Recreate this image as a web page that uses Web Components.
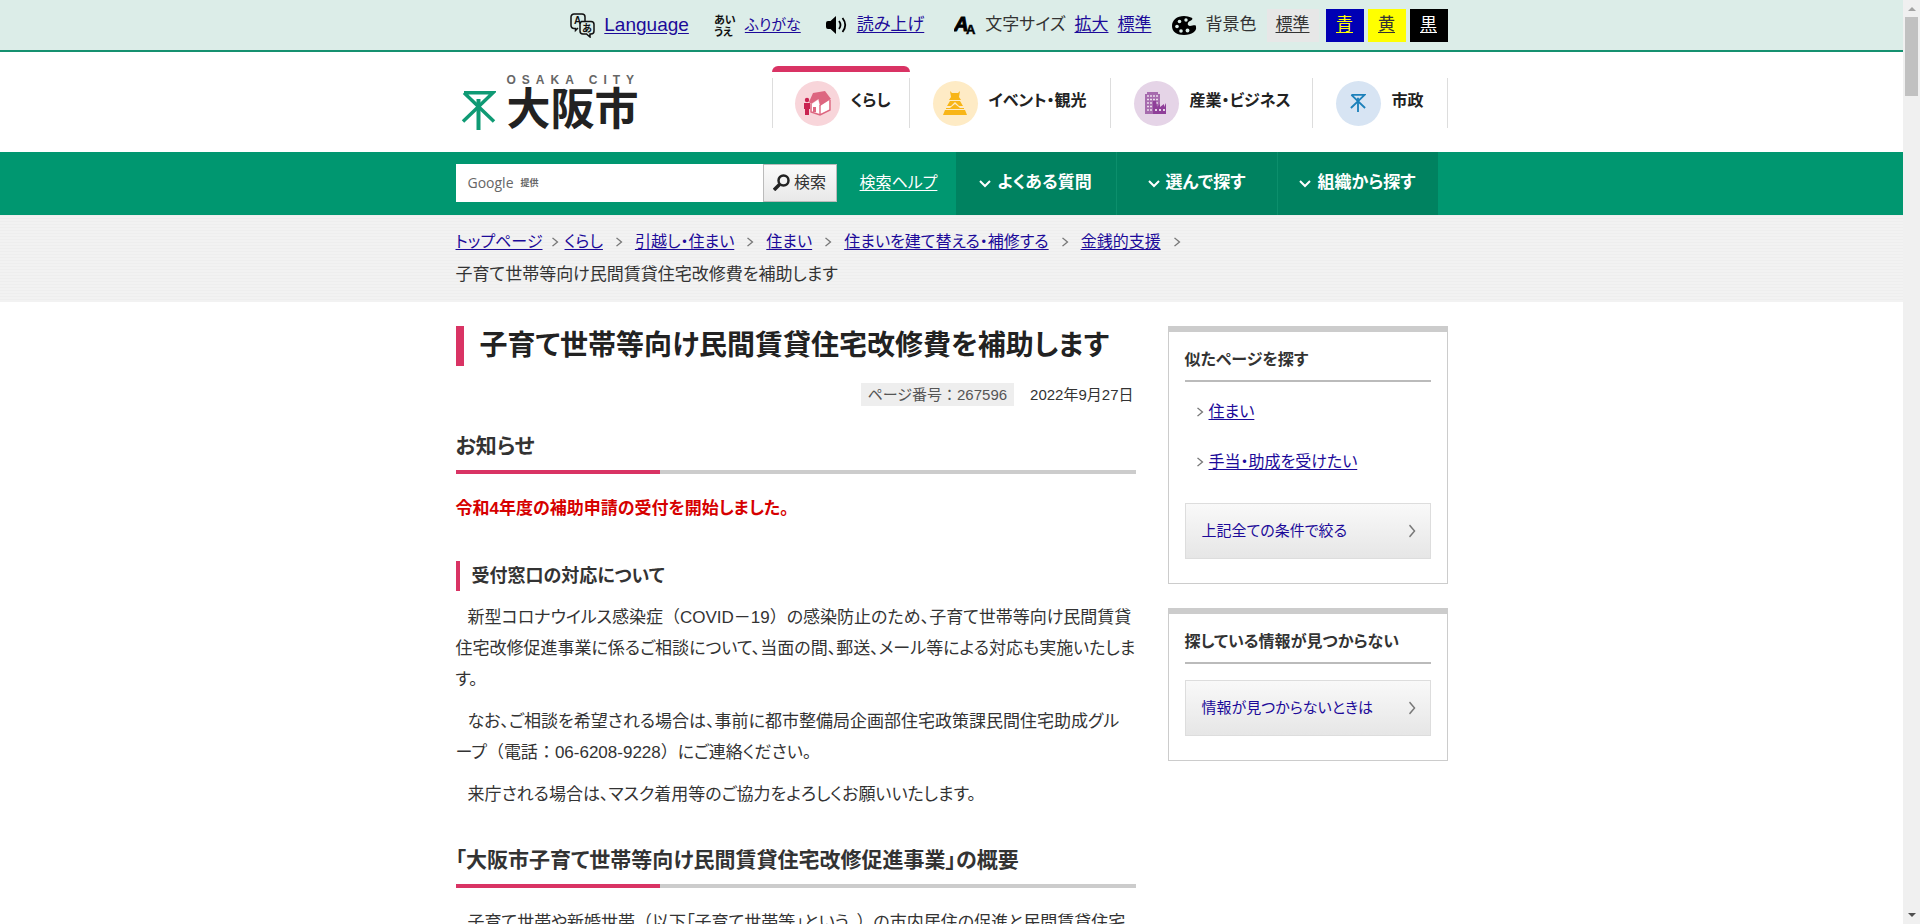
<!DOCTYPE html>
<html lang="ja">
<head>
<meta charset="utf-8">
<meta name="viewport" content="width=device-width, initial-scale=1">
<title>大阪市:子育て世帯等向け民間賃貸住宅改修費を補助します</title>
<style>
  html { scrollbar-width: none; }
  body {
    margin: 0;
    --green: #009770;
    --green-dark: #008260;
    --pink: #d93364;
    --grey: #ccc;
    --link: #1c0a99;
    --page: 992px;
    color: #333;
    background: #fff;
    font: 16px/30px "Liberation Sans", "Noto Sans CJK JP", sans-serif;
    font-feature-settings: "palt";
  }
</style>
</head>
<body>
<osaka-page></osaka-page>

<script>
const define = (name, html) => {
  const tpl = document.createElement('template');
  tpl.innerHTML = html;
  customElements.define(name, class extends HTMLElement {
    constructor() {
      super();
      this.attachShadow({ mode: 'open' }).append(tpl.content.cloneNode(true));
    }
  });
};

/* Chevron: dir="down" turns it */
define('arrow-mark', `
<style>
  :host { display: inline-block; flex: none; width: 8px; height: 10px; color: #777; }
  :host([dir=down]) { width: 12px; height: 12px; color: #fff; }
  :host([size=large]) { width: 8px; height: 14px; }
  svg { display: block; width: 100%; height: 100%; fill: none; stroke: currentColor; stroke-width: 1.4; overflow: visible; }
  .d { display: none; }
  :host([dir=down]) .r { display: none; }
  :host([dir=down]) .d { display: block; stroke-width: 2; }
</style>
<svg class="r" viewBox="0 0 8 12" preserveAspectRatio="none"><path d="M1.5 1 6.5 6 1.5 11"/></svg>
<svg class="d" viewBox="0 0 12 12"><path d="M1 4 6 9 11 4"/></svg>`);

define('tool-item', `
<style>
  :host { display: flex; align-items: center; }
  .icon { flex: none; display: flex; margin-right: 9px; }
  .body { display: flex; gap: 9px; }
</style>
<span class="icon"><slot name="icon"></slot></span><span class="body"><slot></slot></span>`);

define('tool-bar', `
<style>
  :host { display: block; background: #dcede8; border-bottom: 2px solid #159170; }
  .in { max-width: var(--page); height: 50px; margin: 0 auto; display: flex; align-items: center; justify-content: flex-end; font-size: 17px; line-height: 24px; }
  tool-item { margin-right: 25px; }
  tool-item.size { margin: 0 20px 0 5px; }
  tool-item.bg { margin-right: 10px; }
  a { color: var(--link); text-underline-offset: 2px; }
  a.lang { font-size: 19px; }
  a.kana { font-size: 15px; }
  .swatches { display: flex; gap: 4px; }
  button { box-sizing: border-box; height: 33px; min-width: 38px; padding: 0 8px; border: 0; font: inherit; font-feature-settings: inherit; text-decoration: underline; text-underline-offset: 2px; cursor: pointer; }
  .std { background: #e7e7e7; color: #333; min-width: 52px; margin-right: 3px; }
  .blue { background: #0000b4; color: #ff0; }
  .yellow { background: #ff0; color: #333; }
  .black { background: #000; color: #fff; }
  svg { display: block; }
  text { font-family: "Liberation Sans", "Noto Sans CJK JP", sans-serif; font-weight: bold; }
</style>
<div class="in">
  <tool-item>
    <svg slot="icon" width="25" height="25" viewBox="0 0 25 25" fill="none" stroke="#111" stroke-width="1.500">
      <path d="M8 15 5.500 17.500V15.500H4A3 3 0 0 1 1 12.500V4A3 3 0 0 1 4 1H12A3 3 0 0 1 15 4V8"/>
      <path d="M11.500 8.500H21A3 3 0 0 1 24 11.500V18A3 3 0 0 1 21 21H20V24L16.500 21H13A3 3 0 0 1 10 18V10Z"/>
      <text x="4" y="11" font-size="10" fill="#111" stroke="none">A</text>
      <text x="12" y="19" font-size="10" fill="#111" stroke="none">あ</text>
    </svg>
    <a class="lang" href="#language">Language</a>
  </tool-item>
  <tool-item>
    <svg slot="icon" width="22" height="25" viewBox="0 0 22 25" fill="#111">
      <text x="0" y="11" font-size="11">あい</text><text x="0" y="23" font-size="11">うえ</text>
    </svg>
    <a class="kana" href="#furigana">ふりがな</a>
  </tool-item>
  <tool-item>
    <svg slot="icon" width="22" height="20" viewBox="0 0 22 20" fill="#000">
      <path d="M10 1V19L4.500 14H2A2 2 0 0 1 0 12V8A2 2 0 0 1 2 6H4.500Z"/>
      <path d="M13 6Q16 10 13 14M16.500 3Q22 10 16.500 17" fill="none" stroke="#000" stroke-width="1.800"/>
    </svg>
    <a href="#speech">読み上げ</a>
  </tool-item>
  <tool-item class="size">
    <svg slot="icon" width="22" height="22" viewBox="0 0 22 22" fill="#000" stroke="#000">
      <text x="0" y="17" font-size="20" font-style="italic" stroke-width="1">A</text><text x="12" y="20" font-size="13" stroke-width=".5">A</text>
    </svg>
    <span>文字サイズ</span><a href="#larger">拡大</a><a href="#standard">標準</a>
  </tool-item>
  <tool-item class="bg">
    <svg slot="icon" width="25" height="19" viewBox="0 0 25 19">
      <path fill="#000" d="M12 0C5 0 0 4 0 10S5 19 12 19C20 19 25 15 24 11C24 8 21 10 18 10S15 6 18 5S21 2 19 1.500S15 0 12 0Z"/>
      <g fill="#dcede8"><circle cx="14" cy="4" r="1.700"/><circle cx="7.500" cy="5.500" r="1.800"/><circle cx="5" cy="10.500" r="1.800"/><circle cx="9" cy="15" r="1.800"/><circle cx="15.500" cy="14.500" r="1.900"/></g>
    </svg>
    <span>背景色</span>
  </tool-item>
  <div class="swatches">
    <button class="std" type="button">標準</button><button class="blue" type="button">青</button><button class="yellow" type="button">黄</button><button class="black" type="button">黒</button>
  </div>
</div>`);

define('city-logo', `
<style>
  :host { display: block; }
  a { display: flex; align-items: flex-end; gap: 11px; color: #222; text-decoration: none; }
  svg { display: block; margin: 0 0 4px 5px; }
  .names { display: flex; flex-direction: column; }
  .en { font: bold 12px/12px "Liberation Sans", sans-serif; letter-spacing: 6px; color: #666; }
  .ja { font-size: 44px; line-height: 48px; font-weight: bold; font-feature-settings: normal; }
</style>
<a href="#home">
  <svg width="35" height="39" viewBox="0 0 35 39" fill="none" stroke="#0f9a74">
    <path d="M3 1.750H32L2 30.500M3 1.750 33 30.500" stroke-width="3.500"/><path d="M17.500 8V39" stroke-width="4"/>
  </svg>
  <span class="names"><span class="en">OSAKA CITY</span><span class="ja">大阪市</span></span>
</a>`);

define('nav-tab', `
<style>
  :host { display: block; box-sizing: border-box; height: 62px; padding-top: 6px; border-radius: 6px 6px 0 0; }
  :host([current]) { background: linear-gradient(var(--pink) 6px, transparent 6px); }
  a { display: flex; align-items: center; gap: 11px; height: 46px; margin-top: 6px; padding: 0 0 4px 23px; border-right: 1px solid #ddd; color: #222; font-weight: bold; text-decoration: none; white-space: nowrap; line-height: 24px; }
  :host([current]) a { border-left: 1px solid #ddd; padding-left: 22px; }
  .disc { flex: none; display: grid; place-items: center; width: 45px; height: 45px; border-radius: 50%; background: var(--disc); margin-top: 4px; }
</style>
<a href="#section"><span class="disc"><slot name="icon"></slot></span><slot></slot></a>`);

define('site-header', `
<style>
  :host { display: block; }
  .in { max-width: var(--page); height: 100px; margin: 0 auto; display: flex; justify-content: space-between; align-items: flex-start; }
  city-logo { margin-top: 22px; }
  nav { margin-top: 14px; display: grid; grid-template-columns: 138px 201px 202px 135px; }
</style>
<header class="in">
  <city-logo></city-logo>
  <nav aria-label="メインメニュー">
    <nav-tab current style="--disc:#f8d5da">
      <svg slot="icon" width="27" height="25" viewBox="0 0 27 25">
        <path fill="#fff" d="M8 13 14 9 16 15V23L8 20ZM16 15 25 9V19L16 23Z"/>
        <path fill="#dd6680" d="M9 2 21 0 27 8 16 15 14.500 8 7 13 5 11Z"/>
        <path fill="none" stroke="#dd6680" stroke-width="1.400" d="M7 13V21L16 24 26 19V9M16 14V24"/>
        <path fill="#dd6680" d="M9 16H12V21H9Z"/>
        <circle cx="3" cy="9" r="2.200" fill="#c92351"/><path fill="#c92351" d="M0 12H6V18H5V24H1V18H0Z"/>
      </svg>くらし</nav-tab>
    <nav-tab style="--disc:#feebc5">
      <svg slot="icon" width="24" height="24" viewBox="0 0 24 24" fill="#f8b516">
        <path d="M7 0 9 2H15L17 0 16 6H8ZM8 6H16L18 9H6Z"/>
        <path d="M7 10H17L20 15H16L12 11 8 15H4Z"/>
        <path d="M3 17H7L12 13 17 17H21V18H3ZM2 19H22L24 24H0Z"/>
      </svg>イベント・観光</nav-tab>
    <nav-tab style="--disc:#e5d4e7">
      <svg slot="icon" width="22" height="22" viewBox="0 0 22 22">
        <path fill="#a66bae" d="M0 2H2V0H13V2H15V22H0Z"/>
        <path stroke="#eadcec" stroke-width="1.500" stroke-dasharray="2 1" fill="none" d="M2 4H14M2 7.500H14M2 11H14M2 14.500H8M2 18H8"/>
        <path fill="#8f3f99" d="M8 22V9H11L12 15 15 12V15L19 12V15L21 11V22Z"/><path fill="#e5d4e7" d="M10 17H12V19H10ZM14 17H16V19H14ZM18 17H20V19H18Z"/>
      </svg>産業・ビジネス</nav-tab>
    <nav-tab style="--disc:#d7e4f3">
      <svg slot="icon" width="16" height="18" viewBox="0 0 35 39" fill="none" stroke="#1c80ba">
        <path d="M3 1.750H32L2 30.500M3 1.750 33 30.500" stroke-width="4"/><path d="M17.500 8V39" stroke-width="4"/>
      </svg>市政</nav-tab>
  </nav>
</header>`);

define('search-bar', `
<style>
  :host { display: block; background: var(--green); }
  .in { max-width: var(--page); height: 63px; margin: 0 auto; display: flex; align-items: center; line-height: 24px; }
  form { display: flex; width: 381px; height: 38px; margin-bottom: 2px; }
  .field { flex: 1; min-width: 0; display: flex; align-items: center; gap: 7px; padding-left: 12px; background: #fff; color: #666; cursor: text; }
  .g { font-family: "Open Sans", sans-serif; font-size: 14px; }
  .by { font-size: 9px; font-weight: bold; }
  input { flex: 1; min-width: 0; height: 30px; border: 0; outline: 0; background: none; font: inherit; }
  button { display: flex; align-items: center; justify-content: center; gap: 4px; box-sizing: border-box; width: 74px; padding: 0; border: 1px solid #bbb; background: linear-gradient(#fafafa, #e8e8e8); font: inherit; font-feature-settings: inherit; color: #333; }
  .help { margin-left: 23px; padding-bottom: 2px; flex: 1; color: #fff; text-underline-offset: 2px; }
  nav { display: grid; grid-template-columns: repeat(3, 160px); gap: 1px; height: 100%; margin-right: 10px; background: #0c8f6c; }
  nav a { display: flex; align-items: center; justify-content: center; gap: 6px; padding-bottom: 2px; background: var(--green-dark); color: #fff; font-size: 17px; font-weight: bold; text-decoration: none; }
</style>
<div class="in">
  <form role="search" onsubmit="return false">
    <label class="field"><span class="g">Google</span><span class="by">提供</span><input type="text" name="q"></label>
    <button type="submit">
      <svg width="17" height="17" viewBox="0 0 17 17" fill="none" stroke="#222"><circle cx="10.500" cy="6.500" r="5" stroke-width="2.500"/><path d="M6.500 10.500 1 16" stroke-width="3.500"/></svg>検索
    </button>
  </form>
  <a class="help" href="#help">検索ヘルプ</a>
  <nav aria-label="探す">
    <a href="#faq"><arrow-mark dir="down"></arrow-mark>よくある質問</a>
    <a href="#select"><arrow-mark dir="down"></arrow-mark>選んで探す</a>
    <a href="#division"><arrow-mark dir="down"></arrow-mark>組織から探す</a>
  </nav>
</div>`);

define('bread-crumbs', `
<style>
  :host { display: block; background: repeating-linear-gradient(#eee 0 1px, #f2f2f2 1px 3px); }
  ol { list-style: none; max-width: var(--page); box-sizing: border-box; margin: 0 auto; padding: 10px 230px 11px 0; display: flex; flex-wrap: wrap; line-height: 33px; }
  li { display: flex; align-items: center; white-space: nowrap; }
  li:last-child { font-size: 17px; }
  a { color: var(--link); text-underline-offset: 2px; }
  arrow-mark { margin: 0 12px; }
  li:first-child arrow-mark { margin: 0 6px 0 8px; }
</style>
<nav aria-label="現在位置"><ol>
  <li><a href="#top">トップページ</a><arrow-mark></arrow-mark></li>
  <li><a href="#life">くらし</a><arrow-mark></arrow-mark></li>
  <li><a href="#move">引越し・住まい</a><arrow-mark></arrow-mark></li>
  <li><a href="#home">住まい</a><arrow-mark></arrow-mark></li>
  <li><a href="#rebuild">住まいを建て替える・補修する</a><arrow-mark></arrow-mark></li>
  <li><a href="#support">金銭的支援</a><arrow-mark></arrow-mark></li>
  <li aria-current="page">子育て世帯等向け民間賃貸住宅改修費を補助します</li>
</ol></nav>`);

define('section-title', `
<style>
  :host { display: block; }
  h2 { margin: 0; padding-bottom: 13px; font-size: 21px; line-height: 22px; border-bottom: 4px solid; border-image: linear-gradient(90deg, var(--pink) 30%, var(--grey) 30%) 1; }
</style>
<h2><slot></slot></h2>`);

define('main-article', `
<style>
  :host { display: block; }
  h1 { margin: 0; padding-left: 16px; border-left: 8px solid var(--pink); font-size: 28px; line-height: 40px; color: #222; white-space: nowrap; }
  .meta { display: flex; justify-content: flex-end; gap: 16px; margin: 17px 2px 29px 0; font-size: 15px; line-height: 23px; }
  .no { padding: 0 7px; background: #eee; color: #555; }
  .wide { font-feature-settings: normal; }
  h3 { margin: 0 0 11px; padding-left: 12px; border-left: 4px solid var(--pink); font-size: 18px; line-height: 30px; }
  p { margin: 0 0 11px; font-size: 17px; line-height: 31px; text-indent: -5px; }
  .last { margin-bottom: 39px; }
  section-title + p { margin-top: 19px; }
  p.notice { margin-bottom: 37px; font-weight: bold; color: #d60000; text-indent: 0; }
</style>
<article>
  <h1>子育て世帯等向け民間賃貸住宅改修費を補助します</h1>
  <div class="meta"><span class="no">ページ番号<span class="wide">：</span>267596</span><time datetime="2022-09-27">2022年9月27日</time></div>
  <section-title>お知らせ</section-title>
  <p class="notice">令和4年度の補助申請の受付を開始しました。</p>
  <h3>受付窓口の対応について</h3>
  <p>　新型コロナウイルス感染症<span class="wide">（</span>COVID－19<span class="wide">）</span>の感染防止のため、子育て世帯等向け民間賃貸<br>住宅改修促進事業に係るご相談について、当面の間、郵送、メール等による対応も実施いたします。</p>
  <p>　なお、ご相談を希望される場合は、事前に都市整備局企画部住宅政策課民間住宅助成グル<br>ープ<span class="wide">（</span>電話<span class="wide">：</span>06-6208-9228<span class="wide">）</span>にご連絡ください。</p>
  <p class="last">　来庁される場合は、マスク着用等のご協力をよろしくお願いいたします。</p>
  <section-title>「大阪市子育て世帯等向け民間賃貸住宅改修促進事業」の概要</section-title>
  <p>　子育て世帯や新婚世帯<span class="wide">（</span>以下「子育て世帯等」という。<span class="wide">）</span>の市内居住の促進と民間賃貸住宅</p>
</article>`);

define('side-box', `
<style>
  :host { display: block; border: 1px solid #ccc; border-top-width: 6px; padding: 14px 16px 24px; }
  h2 { margin: 0; padding-bottom: 6px; border-bottom: 2px solid #bbb; font-size: 16px; line-height: 28px; }
</style>
<h2><slot name="title"></slot></h2><slot></slot>`);

define('link-button', `
<style>
  :host { display: block; }
  a { box-sizing: border-box; display: flex; justify-content: space-between; align-items: center; height: 56px; padding: 0 14px 0 16px; border: 1px solid #ddd; background: linear-gradient(#f9f9f9, #e6e6e6); color: var(--link); font-size: 15px; text-decoration: none; }
</style>
<a href="#go"><slot></slot><arrow-mark size="large"></arrow-mark></a>`);

define('side-column', `
<style>
  :host { display: flex; flex-direction: column; gap: 24px; }
  ul { list-style: none; margin: 15px 0 26px; padding: 0 0 0 11px; display: grid; gap: 20px; }
  li { display: flex; align-items: center; gap: 5px; }
  a { color: var(--link); text-underline-offset: 2px; }
  .alone { margin-top: 16px; }
</style>
<side-box><span slot="title">似たページを探す</span>
  <ul><li><arrow-mark></arrow-mark><a href="#home">住まい</a></li><li><arrow-mark></arrow-mark><a href="#allowance">手当・助成を受けたい</a></li></ul>
  <link-button>上記全ての条件で絞る</link-button>
</side-box>
<side-box><span slot="title">探している情報が見つからない</span>
  <link-button class="alone">情報が見つからないときは</link-button>
</side-box>`);

define('scroll-rail', `
<style>
  :host { display: flex; flex-direction: column; align-items: center; box-sizing: border-box; width: 17px; padding: 7px 0; background: #f0f0f0; }
  .thumb { width: 13px; height: 79px; margin: 6px 0 auto; background: #c1c1c1; }
  svg { display: block; }
</style>
<svg width="8" height="4"><path d="M0 4 4 0 8 4Z" fill="#a3a3a3"/></svg>
<span class="thumb"></span>
<svg width="8" height="4"><path d="M0 0H8L4 4Z" fill="#505050"/></svg>`);

define('osaka-page', `
<style>
  :host { display: grid; grid-template-columns: minmax(0, 1fr) auto; height: 100vh; }
  .view { overflow: hidden auto; scrollbar-width: none; }
  main { max-width: var(--page); margin: 0 auto; padding: 24px 0 40px; display: grid; grid-template-columns: minmax(0, 680px) 280px; justify-content: space-between; align-items: start; }
</style>
<div class="view">
  <tool-bar></tool-bar>
  <site-header></site-header>
  <search-bar></search-bar>
  <bread-crumbs></bread-crumbs>
  <main><main-article></main-article><side-column></side-column></main>
</div>
<scroll-rail></scroll-rail>`);
</script>
</body>
</html>
